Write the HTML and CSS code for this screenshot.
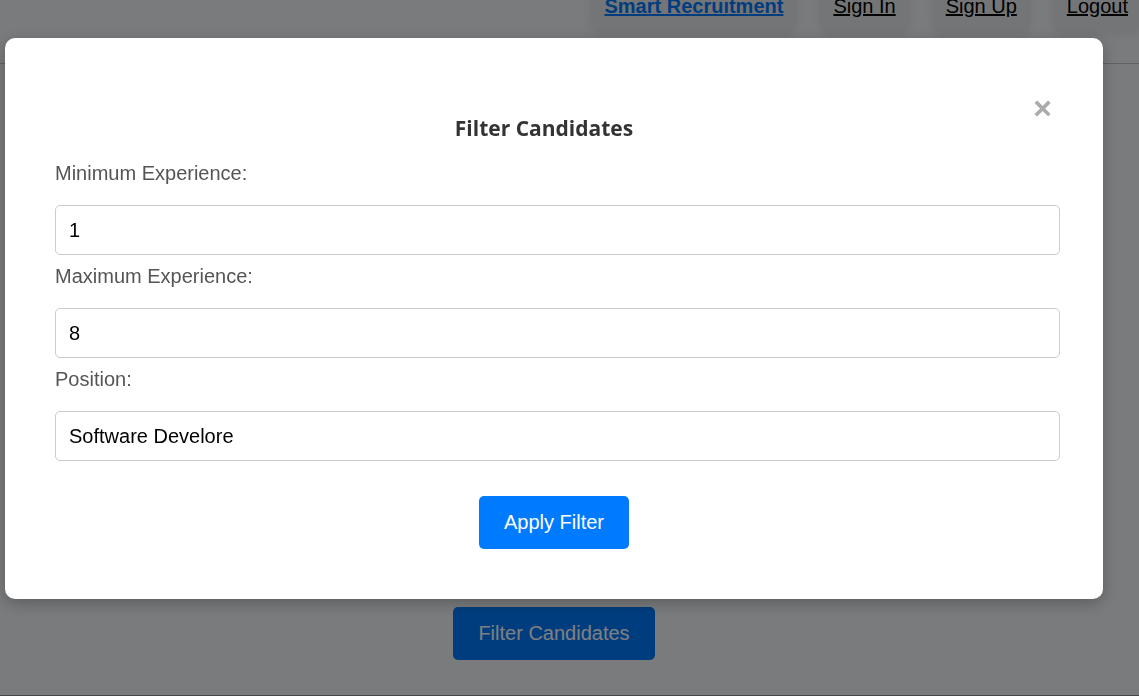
FILE: index.html
```html
<!DOCTYPE html>
<html lang="en">
<head>
<meta charset="utf-8">
<title>Smart Recruitment - Filter Candidates</title>
<link rel="stylesheet" href="styles.css">
</head>
<body>
<header class="site-header">
  <nav class="nav">
    <a class="nav-link nav-brand" href="#">Smart Recruitment</a>
    <a class="nav-link" href="#">Sign In</a>
    <a class="nav-link" href="#">Sign Up</a>
    <a class="nav-link" href="#">Logout</a>
  </nav>
</header>
<main class="page-main">
  <button class="btn btn-primary" type="button">Filter Candidates</button>
</main>
<div class="page-footer-line"></div>

<div class="overlay">
  <div class="modal">
    <span class="modal-close">&times;</span>
    <h2 class="modal-title">Filter Candidates</h2>
    <form class="filter-form">
      <label class="form-label" for="minExp">Minimum Experience:</label>
      <input class="form-input" id="minExp" type="text" value="1">
      <label class="form-label" for="maxExp">Maximum Experience:</label>
      <input class="form-input" id="maxExp" type="text" value="8">
      <label class="form-label" for="position">Position:</label>
      <input class="form-input" id="position" type="text" value="Software Develore">
      <div class="form-actions">
        <button class="btn btn-primary" type="button">Apply Filter</button>
      </div>
    </form>
  </div>
</div>
</body>
</html>
```

FILE: styles.css
```css
html, body {
  margin: 0;
  padding: 0;
  height: 100%;
}

body {
  background: #f4f6f9;
  font-family: "Liberation Sans", Arial, sans-serif;
  overflow: hidden;
  position: relative;
}

.site-header {
  padding-bottom: 31px;
  border-bottom: 1px solid #c4c4c4;
}

.nav {
  display: flex;
  justify-content: flex-end;
  gap: 24px;
  margin-top: -19px;
  margin-right: -2px;
}

.nav-link {
  display: block;
  padding: 14px 13px;
  font-size: 20px;
  line-height: 23px;
  color: #000;
  text-decoration: underline;
  background: #e9eaed;
  border-radius: 10px;
  box-shadow: 0 2px 10px rgba(0, 0, 0, 0.08);
}

.nav-brand {
  color: #007bff;
  font-weight: bold;
}

.page-main {
  display: flex;
  justify-content: center;
  padding: 543px 31px 0 0;
}

.page-footer-line {
  position: absolute;
  left: 0;
  right: 0;
  top: 695px;
  border-top: 1px solid #8a8a8a;
}

.btn {
  font-family: "Liberation Sans", Arial, sans-serif;
  font-size: 20px;
  line-height: 23px;
  padding: 15px 25px;
  border: none;
  border-radius: 5px;
  cursor: pointer;
}

.btn-primary {
  background: #007bff;
  color: #fff;
}

.overlay {
  position: fixed;
  inset: 0;
  background: rgba(0, 0, 0, 0.5);
}

.modal {
  position: absolute;
  left: 5px;
  top: 38px;
  width: 1098px;
  box-sizing: border-box;
  padding: 78px 50px 50px 50px;
  background: #fff;
  border-radius: 10px;
  box-shadow: 0 4px 16px rgba(0, 0, 0, 0.25);
}

.modal-close {
  position: absolute;
  top: 54px;
  right: 51px;
  font-family: "Liberation Sans", Arial, sans-serif;
  font-size: 32px;
  line-height: 32px;
  font-weight: bold;
  color: #aaa;
  cursor: pointer;
}

.modal-title {
  margin: 0 0 12px 0;
  padding: 1px 20px 0 0;
  text-align: center;
  font-family: "Open Sans", "Noto Sans", sans-serif;
  font-size: 21px;
  line-height: 23px;
  font-weight: bold;
  color: #333;
}

.filter-form {
  display: flex;
  flex-direction: column;
}

.form-label {
  display: block;
  margin: 10px 0 20px 0;
  font-size: 20px;
  line-height: 23px;
  color: #555;
}

.form-input {
  display: block;
  height: 50px;
  margin-right: -7px;
  box-sizing: border-box;
  padding: 0 13px;
  font-family: "Liberation Sans", Arial, sans-serif;
  font-size: 20px;
  color: #000;
  background: #fff;
  border: 1px solid #ccc;
  border-radius: 5px;
  outline: none;
}

.form-actions {
  display: flex;
  justify-content: center;
  margin-top: 35px;
}
```
